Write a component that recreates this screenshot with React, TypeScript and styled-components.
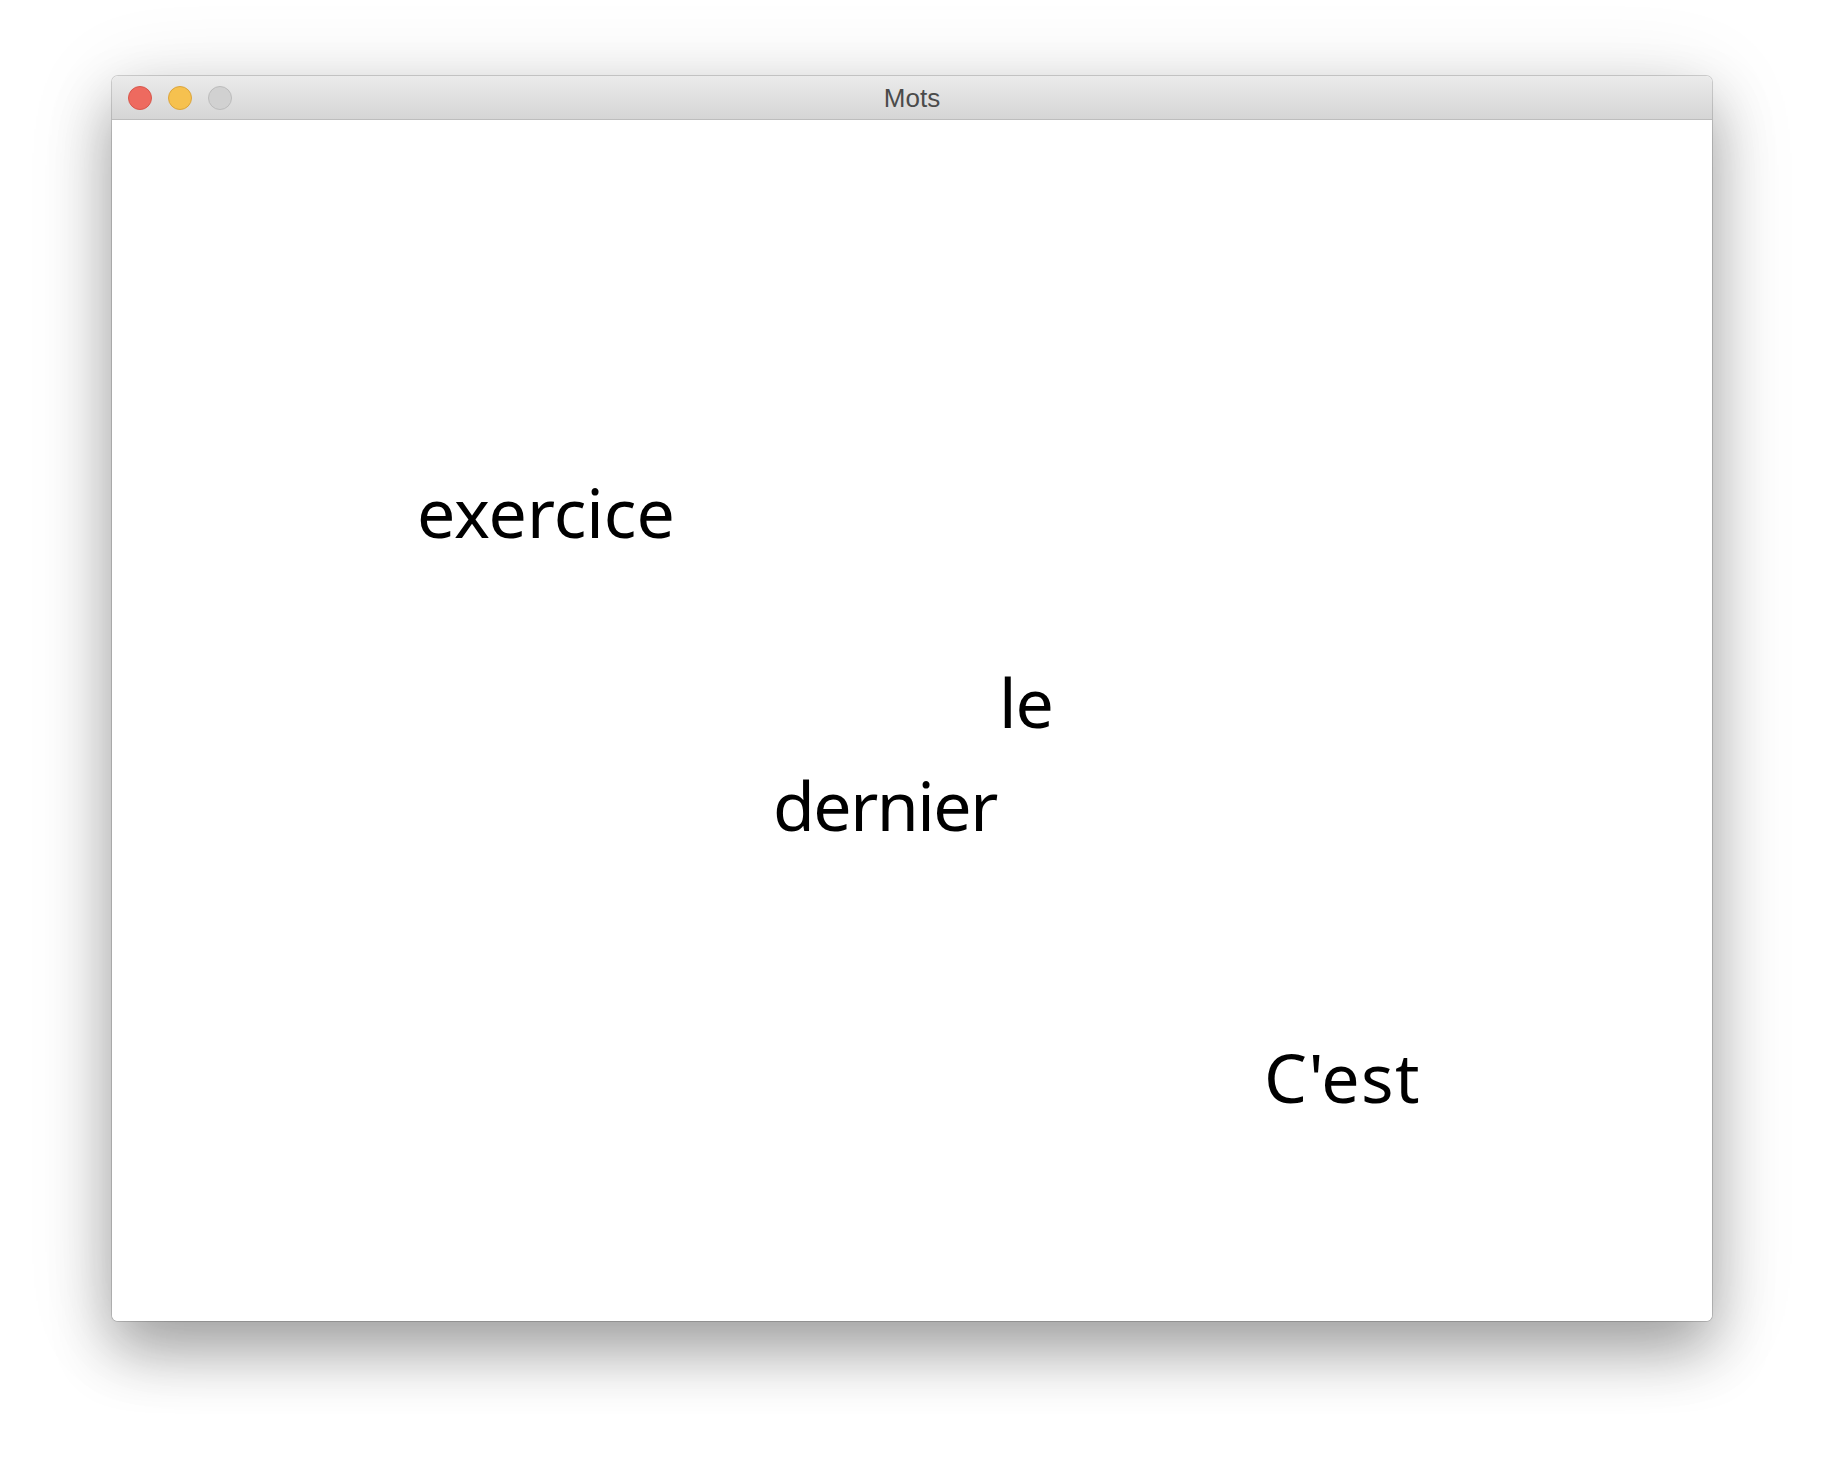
import React from 'react';
import styled, { createGlobalStyle } from 'styled-components';

const GlobalStyle = createGlobalStyle`
    html, body {
        margin: 0;
        padding: 0;
        background: #ffffff;
    }

    body {
        font-family: "Noto Sans", "DejaVu Sans", sans-serif;
    }
`;

const Page = styled.div`
    width: 1824px;
    height: 1468px;
    box-sizing: border-box;
    padding: 76px 0 0 112px;
    overflow: hidden;
`;

const Window = styled.div`
    width: 1600px;
    height: 1245px;
    display: flex;
    flex-direction: column;
    border-radius: 6px;
    background: #ffffff;
    box-shadow:
        0 0 0 1px rgba(0, 0, 0, 0.16),
        0 30px 60px rgba(0, 0, 0, 0.32),
        0 10px 90px rgba(0, 0, 0, 0.12);
    overflow: hidden;
`;

const TitleBar = styled.div`
    flex: 0 0 44px;
    box-sizing: border-box;
    display: grid;
    grid-template-columns: 1fr auto 1fr;
    align-items: center;
    padding: 0 16px;
    background: linear-gradient(#ebebeb, #d5d5d5);
    border-bottom: 1px solid #bdbdbd;
`;

const Lights = styled.div`
    display: flex;
    gap: 16px;
    align-items: center;
`;

const Light = styled.span<{ $fill: string; $edge: string }>`
    width: 24px;
    height: 24px;
    box-sizing: border-box;
    border-radius: 50%;
    background: ${p => p.$fill};
    border: 1px solid ${p => p.$edge};
`;

const Title = styled.div`
    font-family: "Liberation Sans", Arial, sans-serif;
    font-size: 26px;
    color: #4b4b4b;
    line-height: 1;
    margin-top: 1px;
`;

const Canvas = styled.div`
    position: relative;
    flex: 1;
    background: #ffffff;
`;

const Word = styled.span<{ $tracking: number }>`
    position: absolute;
    font-family: "Noto Sans", "DejaVu Sans", sans-serif;
    font-size: 68px;
    line-height: 1;
    letter-spacing: ${p => p.$tracking}px;
    color: #000000;
    white-space: nowrap;
`;

// x = left of the glyph box, y = baseline, both relative to the canvas
const words = [
    { text: 'exercice', x: 305, y: 418, tracking: 0 },
    { text: 'le', x: 887, y: 608, tracking: -1 },
    { text: 'dernier', x: 661, y: 711, tracking: -1.5 },
    { text: "C'est", x: 1152, y: 983, tracking: 1.5 },
];

const BASELINE = 0.888 * 68;

export default function App() {
    return (
        <>
            <GlobalStyle />
            <Page>
                <Window>
                    <TitleBar>
                        <Lights>
                            <Light $fill="#ee6a5f" $edge="#d8574c" />
                            <Light $fill="#f6c14f" $edge="#dca53c" />
                            <Light $fill="#d1d1d1" $edge="#bcbcbc" />
                        </Lights>
                        <Title>Mots</Title>
                        <span />
                    </TitleBar>
                    <Canvas>
                        {words.map(w => (
                            <Word
                                key={w.text}
                                $tracking={w.tracking}
                                style={{ left: w.x, top: w.y - BASELINE }}
                            >
                                {w.text}
                            </Word>
                        ))}
                    </Canvas>
                </Window>
            </Page>
        </>
    );
}
